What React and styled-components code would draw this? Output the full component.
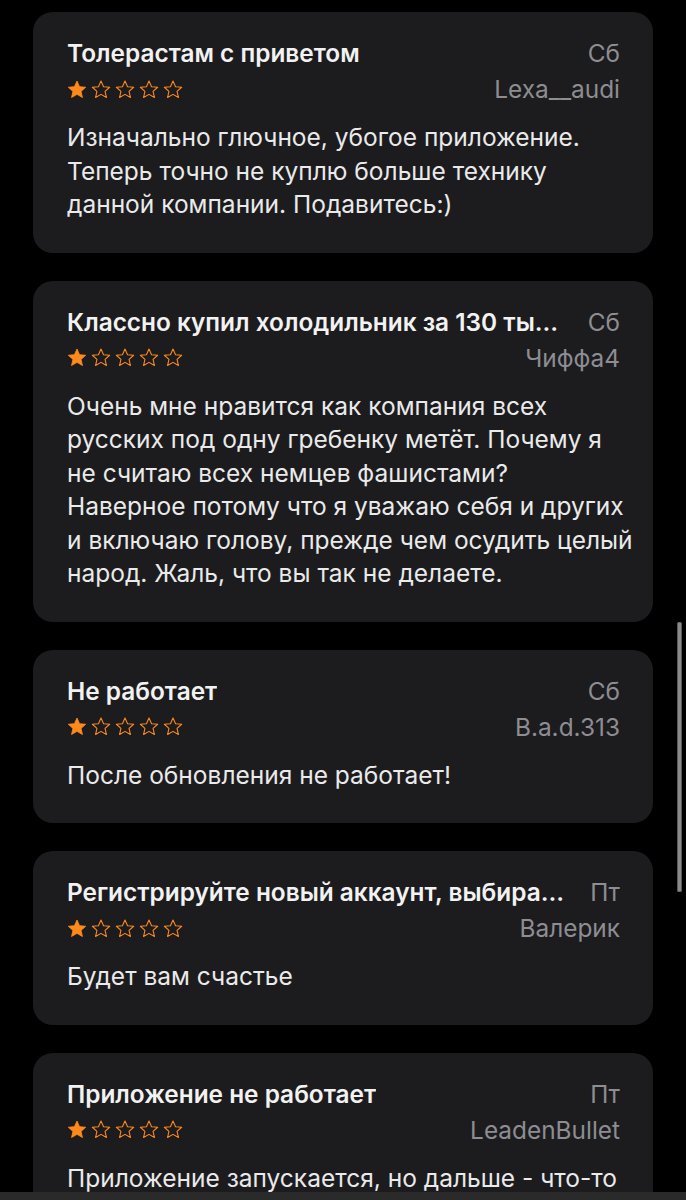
import styled, { createGlobalStyle } from 'styled-components';

const GlobalStyle = createGlobalStyle`
  html, body {
    margin: 0;
    padding: 0;
    background: #000000;
  }
  body {
    font-family: Inter, "Noto Sans", sans-serif;
    -webkit-font-smoothing: antialiased;
  }
`;

const Page = styled.div`
  position: relative;
  width: 686px;
  height: 1200px;
  overflow: hidden;
  background: #000000;
`;

const List = styled.div`
  display: flex;
  flex-direction: column;
  gap: 28px;
  padding: 12px 33px 0 33px;
`;

const Card = styled.div`
  background: #1c1c1e;
  border-radius: 20px;
  padding: 26px 33px 31px 34px;
`;

const Row = styled.div`
  display: flex;
  justify-content: space-between;
  align-items: center;
  height: ${(p) => (p.$top ? '30px' : '34px')};
  margin-top: ${(p) => (p.$top ? '0' : '4px')};
  gap: 16px;
`;

const Title = styled.div`
  font-size: 24.4px;
  font-weight: 600;
  color: #f2f2f2;
  white-space: nowrap;
  overflow: hidden;
  text-overflow: ellipsis;
  min-width: 0;
`;

const Meta = styled.div`
  font-size: 24.4px;
  font-weight: 400;
  color: #8d8d92;
  white-space: nowrap;
  flex-shrink: 0;
`;

const Stars = styled.div`
  display: flex;
  gap: 4px;
`;

const Body = styled.p`
  margin: 15px 0 0 0;
  font-size: 24.5px;
  line-height: 33.5px;
  color: #eaeaea;
  white-space: pre;
`;

const Scrollbar = styled.div`
  position: absolute;
  left: 677px;
  top: 622px;
  width: 5px;
  height: 270px;
  border-radius: 3px;
  background: #8a8a8a;
  box-shadow: inset 1px 0 0 #5a5a5a, inset -1px 0 0 #5a5a5a;
`;

const BottomBar = styled.div`
  position: absolute;
  left: 0;
  right: 0;
  bottom: 0;
  height: 8px;
  background: #2a2a2a;
`;

const Star = ({ filled }) => (
  <svg width="20" height="19" viewBox="0 0 24 23">
    <path
      d="M12 1.2l3.1 6.9 7.4.7-5.6 5 1.7 7.4L12 17.4l-6.6 3.8 1.7-7.4-5.6-5 7.4-.7z"
      fill={filled ? '#ff8a1c' : 'none'}
      stroke="#ff8a1c"
      strokeWidth={filled ? 1 : 1.3}
      strokeLinejoin="round"
    />
  </svg>
);

// line breaks follow the app's wrapping
const reviews = [
  {
    title: 'Толерастам с приветом',
    day: 'Сб',
    author: 'Lexa__audi',
    text: 'Изначально глючное, убогое приложение.\nТеперь точно не куплю больше технику\nданной компании. Подавитесь:)',
  },
  {
    title: 'Классно купил холодильник за 130 тысяч',
    day: 'Сб',
    author: 'Чиффа4',
    text: 'Очень мне нравится как компания всех\nрусских под одну гребенку метёт. Почему я\nне считаю всех немцев фашистами?\nНаверное потому что я уважаю себя и других\nи включаю голову, прежде чем осудить целый\nнарод. Жаль, что вы так не делаете.',
  },
  {
    title: 'Не работает',
    day: 'Сб',
    author: 'B.a.d.313',
    text: 'После обновления не работает!',
  },
  {
    title: 'Регистрируйте новый аккаунт, выбирайте',
    day: 'Пт',
    author: 'Валерик',
    text: 'Будет вам счастье',
  },
  {
    title: 'Приложение не работает',
    day: 'Пт',
    author: 'LeadenBullet',
    text: 'Приложение запускается, но дальше - что-то\nпошло не так и ничего не грузится.',
  },
];

const Review = ({ review }) => (
  <Card>
    <Row $top>
      <Title>{review.title}</Title>
      <Meta>{review.day}</Meta>
    </Row>
    <Row>
      <Stars>
        {[0, 1, 2, 3, 4].map((i) => (
          <Star key={i} filled={i === 0} />
        ))}
      </Stars>
      <Meta>{review.author}</Meta>
    </Row>
    <Body>{review.text}</Body>
  </Card>
);

export default function App() {
  return (
    <>
      <GlobalStyle />
      <Page>
        <List>
          {reviews.map((r) => (
            <Review key={r.author} review={r} />
          ))}
        </List>
        <Scrollbar />
        <BottomBar />
      </Page>
    </>
  );
}
